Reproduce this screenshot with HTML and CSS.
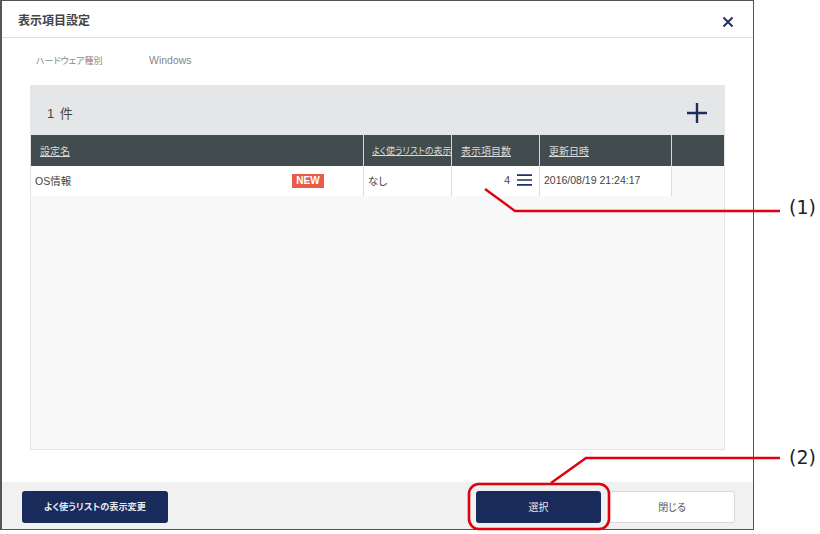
FILE: index.html
```html
<!DOCTYPE html>
<html lang="ja">
<head>
<meta charset="utf-8">
<title>表示項目設定</title>
<link rel="stylesheet" href="styles.css">
</head>
<body>
<div class="stage">
  <div class="modal">
    <header class="modal-head">
      <h1 class="modal-title">表示項目設定</h1>
      <svg class="close-icon" width="12" height="12" viewBox="0 0 12 12"><path d="M1.5 1.5 10.5 10.5M10.5 1.5 1.5 10.5" stroke="#1f3263" stroke-width="2" fill="none"/></svg>
    </header>
    <div class="modal-body">
      <div class="info-row">
        <span class="info-label">ハードウェア種別</span>
        <span class="info-value">Windows</span>
      </div>
      <section class="panel">
        <div class="count-bar">
          <span class="count">1 件</span>
          <svg class="plus-icon" width="20" height="20" viewBox="0 0 20 20"><path d="M10 0V20M0 10H20" stroke="#1b2d5c" stroke-width="2.4" fill="none"/></svg>
        </div>
        <div class="grid head">
          <div class="cell"><a class="sort">設定名</a></div>
          <div class="cell clip"><a class="sort">よく使うリストの表示</a></div>
          <div class="cell pad-m"><a class="sort">表示項目数</a></div>
          <div class="cell pad-l"><a class="sort">更新日時</a></div>
          <div class="cell"></div>
        </div>
        <div class="grid row">
          <div class="cell name"><span>OS情報</span><span class="badge">NEW</span></div>
          <div class="cell">なし</div>
          <div class="cell num"><span>4</span>
            <svg width="15" height="12" viewBox="0 0 15 12"><path d="M0 1.2H15M0 6H15M0 10.8H15" stroke="#1f3263" stroke-width="1.7" fill="none"/></svg>
          </div>
          <div class="cell date">2016/08/19 21:24:17</div>
          <div class="cell"></div>
        </div>
      </section>
    </div>
    <footer class="modal-foot">
      <button class="btn primary wide">よく使うリストの表示変更</button>
      <div class="foot-right">
        <button class="btn primary select">選択</button>
        <button class="btn ghost">閉じる</button>
      </div>
    </footer>
  </div>
  <svg class="callouts" width="820" height="534" viewBox="0 0 820 534">
    <path d="M485 189 515 211H780" fill="none" stroke="#e0000f" stroke-width="2.4"/>
    <path d="M551 483 586 458H780" fill="none" stroke="#e0000f" stroke-width="2.4"/>
    <rect x="469" y="484" width="140" height="45" rx="10" fill="none" stroke="#e0000f" stroke-width="2.6"/>
  </svg>
  <span class="callout-label one">(1)</span>
  <span class="callout-label two">(2)</span>
</div>
</body>
</html>
```
FILE: styles.css
```css
* { box-sizing: border-box; }
html, body { margin: 0; padding: 0; background: #fff; }
body {
  font-family: "Liberation Sans", "Noto Sans CJK JP", sans-serif;
  font-feature-settings: "palt";
  color: #444;
}
.stage { position: relative; width: 820px; height: 534px; overflow: hidden; }
.modal {
  width: 754px;
  height: 530px;
  border: 1px solid #555;
  border-left-width: 2px;
  display: flex;
  flex-direction: column;
  background: #fff;
}
.modal-head {
  height: 37px;
  flex: none;
  display: flex;
  align-items: center;
  justify-content: space-between;
  padding: 1px 19px 0 16px;
  border-bottom: 1px solid #dedede;
}
.modal-title { margin: 0; font-size: 12px; font-weight: 700; color: #444; }
.close-icon { margin-top: 4px; }
.modal-body { flex: 1; padding: 0 28px; }
.info-row { height: 47px; display: flex; align-items: center; padding: 0 0 3px 6px; font-size: 9px; color: #888; }
.info-label { width: 113px; }
.info-value { font-size: 10.5px; }
.panel {
  width: 695px;
  height: 365px;
  background: #f8f8f8;
  border: 1px solid #e4e4e4;
  border-top: 0;
}
.count-bar {
  height: 50px;
  background: #e5e6e8;
  display: flex;
  align-items: center;
  justify-content: space-between;
  padding: 5px 18px 0 17px;
  margin: 0 -1px;
}
.count { font-size: 13px; color: #444; letter-spacing: 1px; }
.grid { display: grid; grid-template-columns: 333px 88px 88px 132px 1fr; }
.head { height: 31px; background: #424b4d; color: #ddd; font-size: 10px; }
.head .cell { border-right: 1px solid #d5d8d8; display: flex; align-items: center; padding: 0 0 1px 9px; }
.head .cell:last-child { border-right: 0; }
.head .clip { overflow: hidden; white-space: nowrap; font-size: 9px; padding-left: 8px; }
.sort { text-decoration: underline; color: #d8dbdb; }
.row { height: 30px; background: #fff; font-size: 10.5px; color: #444; }
.row .cell { border-right: 1px solid #ddd; display: flex; align-items: center; padding: 0 4px 2px; }
.row .cell:last-child { border-right: 0; background: #f8f8f8; }
.row .name { justify-content: space-between; padding-right: 39px; }
.badge {
  background: #ea5c48;
  color: #fff;
  font-weight: 700;
  font-size: 10px;
  line-height: 14px;
  height: 14px;
  width: 32px;
  text-align: center;
  margin-top: 2px;
}
.row .num { justify-content: flex-end; gap: 7px; padding-right: 7px; }
.modal-foot {
  height: 47px;
  flex: none;
  background: #f1f1f1;
  display: flex;
  justify-content: space-between;
  align-items: flex-start;
  padding: 9px 18px 0 20px;
}
.foot-right { display: flex; gap: 8px; }
.btn {
  height: 32px;
  border-radius: 3px;
  font-family: inherit;
  font-feature-settings: inherit;
  font-size: 10px;
  padding: 0 0 2px;
  border: 1px solid transparent;
}
.primary { background: #182b5a; color: #e8e8ee; }
.wide { width: 146px; font-weight: 700; font-size: 9.2px; }
.select { width: 125px; }
.ghost { width: 126px; background: #fff; border-color: #d8d8d8; color: #555; }
.callouts { position: absolute; left: 0; top: 0; pointer-events: none; }
.callout-label {
  position: absolute;
  left: 789px;
  font-family: "DejaVu Sans", sans-serif;
  font-size: 19px;
  line-height: 22px;
  color: #222;
}
.callout-label.one { top: 196px; }
.callout-label.two { top: 446px; }
```
